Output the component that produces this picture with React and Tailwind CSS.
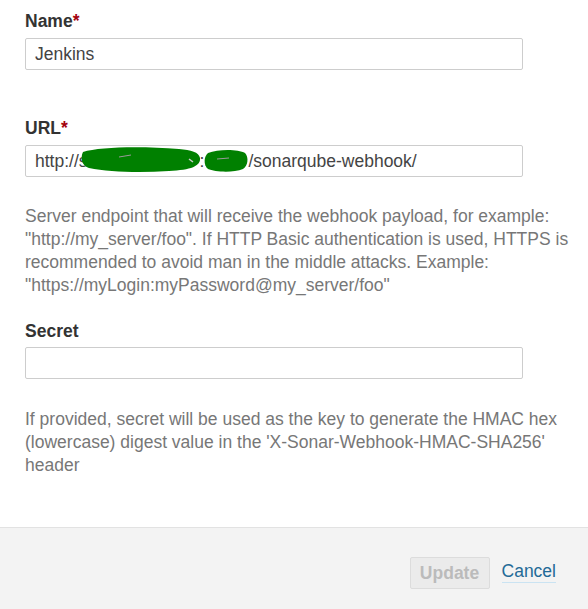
export default function App() {
  const font = { fontFamily: '"Liberation Sans", Arial, sans-serif' };
  return (
    <div className="w-[588px] h-[609px] bg-white flex flex-col text-[17.5px] leading-[23px]" style={font}>
      <div className="flex-1 pl-[25px] pr-[15px] pt-[10px]">
        <div className="font-bold text-[#333]">
          Name<span className="text-[#a4030f]">*</span>
        </div>
        <div className="mt-[5px] w-[498px] h-[32px] border border-[#cdcdcd] rounded-[2px] flex items-center pl-[9px] text-[#444]">
          Jenkins
        </div>

        <div className="mt-[47px] font-bold text-[#333]">
          URL<span className="text-[#a4030f]">*</span>
        </div>
        <div className="mt-[5px] w-[498px] h-[32px] border border-[#cdcdcd] rounded-[2px] flex items-center pl-[9px] text-[#444] whitespace-nowrap">
          <span>http://s</span>
          <span className="relative inline-block w-[112px] h-[20px]">
            <svg className="absolute left-[-9px] top-[-5px]" width="124" height="28" viewBox="0 0 124 28">
              <path d="M4 6 C 20 1, 60 0, 100 3 C 112 4, 120 6, 121 12 C 122 20, 112 24, 90 25 C 60 27, 30 26, 10 22 C 3 20, 1 12, 4 6 Z" fill="#008000" />
              <path d="M40 11 L52 9" stroke="#9a9a9a" strokeWidth="1" />
              <path d="M110 13 L114 16" stroke="#cccccc" strokeWidth="1.5" />
            </svg>
          </span>
          <span>:</span>
          <span className="relative inline-block w-[44px] h-[20px]">
            <svg className="absolute left-[-1px] top-[-3px]" width="46" height="26" viewBox="0 0 46 26">
              <path d="M5 5 C 15 1, 35 1, 42 5 C 46 9, 45 18, 40 21 C 30 25, 12 24, 5 21 C 0 17, 1 8, 5 5 Z" fill="#008000" />
              <path d="M14 11 L26 10" stroke="#9a9a9a" strokeWidth="1" />
            </svg>
          </span>
          <span>/sonarqube-webhook/</span>
        </div>

        <p className="mt-[28px] w-[548px] text-[#777]">
          Server endpoint that will receive the webhook payload, for example: "http://my_server/foo". If HTTP Basic authentication is used, HTTPS is recommended to avoid man in the middle attacks. Example: "https://myLogin:myPassword@my_server/foo"
        </p>

        <div className="mt-[23px] font-bold text-[#333]">Secret</div>
        <div className="mt-[4px] w-[498px] h-[32px] border border-[#cdcdcd] rounded-[2px]"></div>

        <p className="mt-[29px] w-[548px] text-[#777]">
          If provided, secret will be used as the key to generate the HMAC hex (lowercase) digest value in the 'X-Sonar-Webhook-HMAC-SHA256' header
        </p>
      </div>
      <div className="h-[82px] border-t border-[#e2e2e2] bg-[#f3f3f3] flex items-start justify-end pr-[32px] pt-[29px]">
        <button className="h-[32px] w-[80px] border border-[#dcdcdc] rounded-[2px] bg-[#ebebeb] text-[#bbbbbb] font-bold">
          Update
        </button>
        <a className="ml-[12px] mt-[3px] text-[#236a97] border-b border-[#cae3f2] leading-[22px]">Cancel</a>
      </div>
    </div>
  );
}
